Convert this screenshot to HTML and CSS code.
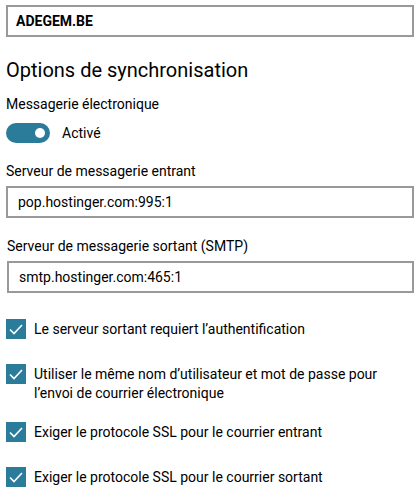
FILE: index.html
```html
<!DOCTYPE html>
<html lang="fr">
<head>
    <meta charset="UTF-8">
    <meta name="viewport" content="width=device-width, initial-scale=1.0">
    <title>Options de synchronisation</title>
    <link rel="stylesheet" href="styles.css">
</head>
<body>
    <div class="container">
        <div class="account-box">ADEGEM.BE</div>

        <h1>Options de synchronisation</h1>

        <div class="form-group">
            <div class="label">Messagerie électronique</div>
            <div class="toggle-row">
                <span class="toggle"><span class="knob"></span></span>
                <span>Activé</span>
            </div>
        </div>

        <div class="form-group">
            <label class="label" for="incoming">Serveur de messagerie entrant</label>
            <input type="text" id="incoming" value="pop.hostinger.com:995:1">
        </div>

        <div class="form-group smtp">
            <label class="label" for="outgoing">Serveur de messagerie sortant (SMTP)</label>
            <input type="text" id="outgoing" value="smtp.hostinger.com:465:1">
        </div>

        <ul class="checks">
            <li><span class="box"><svg viewBox="0 0 20 20"><path d="M4 10.5 L8 14.5 L16 6"/></svg></span><span>Le serveur sortant requiert l’authentification</span></li>
            <li class="two-lines"><span class="box"><svg viewBox="0 0 20 20"><path d="M4 10.5 L8 14.5 L16 6"/></svg></span><span>Utiliser le même nom d’utilisateur et mot de passe pour l’envoi de courrier électronique</span></li>
            <li><span class="box"><svg viewBox="0 0 20 20"><path d="M4 10.5 L8 14.5 L16 6"/></svg></span><span>Exiger le protocole SSL pour le courrier entrant</span></li>
            <li><span class="box"><svg viewBox="0 0 20 20"><path d="M4 10.5 L8 14.5 L16 6"/></svg></span><span>Exiger le protocole SSL pour le courrier sortant</span></li>
        </ul>
    </div>
</body>
</html>
```

FILE: styles.css
```css
body {
    font-family: Roboto, "Noto Sans", sans-serif;
    font-size: 14px;
    color: #000;
    background-color: #fff;
    margin: 0;
    padding: 0;
}

.container {
    padding: 5px 6px 0 6px;
}

.account-box {
    height: 32px;
    box-sizing: border-box;
    border: 2px solid #999;
    padding-left: 8px;
    font-weight: bold;
    font-size: 14px;
    line-height: 28px;
}

h1 {
    font-size: 20px;
    font-weight: normal;
    line-height: 28px;
    margin: 19px 0 10px 0;
}

.label {
    display: block;
    line-height: 20px;
}

.form-group {
    margin-bottom: 18px;
}

.toggle-row {
    display: flex;
    align-items: center;
    gap: 12px;
    margin-top: 9px;
    line-height: 20px;
}

.toggle {
    width: 44px;
    height: 20px;
    border-radius: 10px;
    background-color: #2b7b9b;
    position: relative;
}

.toggle .knob {
    position: absolute;
    right: 5px;
    top: 5px;
    width: 10px;
    height: 10px;
    border-radius: 50%;
    background-color: #fff;
}

input[type="text"] {
    display: block;
    width: 100%;
    height: 32px;
    box-sizing: border-box;
    border: 2px solid #999;
    margin-top: 5px;
    padding: 0 10px;
    font-family: inherit;
    font-size: 14px;
    color: #000;
    outline: none;
}

.smtp {
    margin-bottom: 0;
    padding-left: 1px;
}

.checks {
    list-style: none;
    margin: 26px 0 0 0;
    padding: 0;
}

.checks li {
    display: flex;
    gap: 8px;
    line-height: 20px;
    margin-bottom: 25px;
}

.checks li.two-lines {
    line-height: 19px;
    margin-bottom: 19px;
}

.checks li.two-lines span:last-child {
    padding-top: 1px;
}

.box {
    flex: 0 0 20px;
    width: 20px;
    height: 20px;
    background-color: #2b7b9b;
}

.box svg {
    display: block;
    width: 20px;
    height: 20px;
    fill: none;
    stroke: #fff;
    stroke-width: 1.6;
}
```
